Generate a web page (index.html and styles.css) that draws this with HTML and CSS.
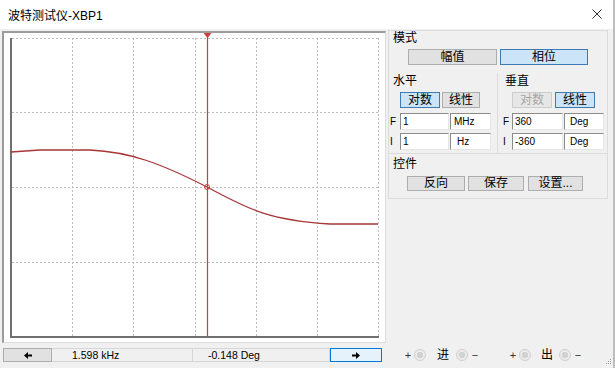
FILE: index.html
```html
<!DOCTYPE html>
<html lang="zh-CN">
<head>
    <meta charset="UTF-8">
    <title>波特测试仪-XBP1</title>
    <link rel="stylesheet" href="styles.css">
</head>
<body>
<div class="window">

    <!-- Title bar -->
    <div class="titlebar">
        <span class="title">波特测试仪-XBP1</span>
        <svg class="close" width="10" height="10" viewBox="0 0 10 10">
            <path d="M0.5 0.5 L9.5 9.5 M9.5 0.5 L0.5 9.5" stroke="#333" stroke-width="1" fill="none"/>
        </svg>
    </div>

    <div class="main">
        <!-- Plot area -->
        <div class="graph">
            <svg viewBox="4 33 381 309" width="381" height="309">
                <g class="grid">
                    <line x1="12" y1="38.5" x2="378" y2="38.5"/>
                    <line x1="378.5" y1="38" x2="378.5" y2="336"/>
                    <line x1="72.5" y1="38" x2="72.5" y2="336"/>
                    <line x1="133.5" y1="38" x2="133.5" y2="336"/>
                    <line x1="195.5" y1="38" x2="195.5" y2="336"/>
                    <line x1="256.5" y1="38" x2="256.5" y2="336"/>
                    <line x1="317.5" y1="38" x2="317.5" y2="336"/>
                    <line x1="12" y1="112.5" x2="378" y2="112.5"/>
                    <line x1="12" y1="187.5" x2="378" y2="187.5"/>
                    <line x1="12" y1="262.5" x2="378" y2="262.5"/>
                </g>
                <g class="axis">
                    <line x1="11" y1="38" x2="11" y2="338"/>
                    <line x1="10" y1="337" x2="379" y2="337"/>
                </g>
                <path class="curve" d="M11 152 L40 150 L90 150 C130 152 160 163 207 187 C245 207 265 220 330 224 L378 224"/>
                <line class="cursor" x1="207.5" y1="33" x2="207.5" y2="336"/>
                <polygon class="cursor-head" points="203.5,33 211.5,33 207.5,38"/>
                <circle class="cursor-mark" cx="207" cy="187" r="2.5"/>
            </svg>
        </div>

        <!-- Settings panel -->
        <div class="side">
            <div class="label">模式</div>
            <div class="mode-row">
                <button class="btn mode-mag">幅值</button>
                <button class="btn mode-phase on">相位</button>
            </div>

            <div class="axes">
                <div class="axis-box horiz">
                    <div class="label">水平</div>
                    <div class="toggle">
                        <button class="btn log on">对数</button>
                        <button class="btn lin">线性</button>
                    </div>
                    <div class="field-row">
                        <span class="fl">F</span>
                        <input class="num" value="1" readonly>
                        <input class="unit" value="MHz" readonly>
                    </div>
                    <div class="field-row">
                        <span class="fl">I</span>
                        <input class="num" value="1" readonly>
                        <input class="unit hz" value="Hz" readonly>
                    </div>
                </div>
                <div class="axis-box vert">
                    <div class="label">垂直</div>
                    <div class="toggle">
                        <button class="btn log off">对数</button>
                        <button class="btn lin on">线性</button>
                    </div>
                    <div class="field-row">
                        <span class="fl">F</span>
                        <input class="num" value="360" readonly>
                        <input class="unit deg" value="Deg" readonly>
                    </div>
                    <div class="field-row">
                        <span class="fl">I</span>
                        <input class="num" value="-360" readonly>
                        <input class="unit deg" value="Deg" readonly>
                    </div>
                </div>
            </div>

            <div class="label ctrl-label">控件</div>
            <div class="ctrl-row">
                <button class="btn rev">反向</button>
                <button class="btn save">保存</button>
                <button class="btn setup">设置...</button>
            </div>
        </div>
    </div>

    <!-- Cursor readout and terminals -->
    <div class="bottom">
        <div class="readout">
            <button class="btn arrow">
                <svg width="8" height="7" viewBox="0 0 8 7"><polygon points="0,3.5 4,0 4,2.5 8,2.5 8,4.5 4,4.5 4,7" fill="#000"/></svg>
            </button>
            <div class="value freq">1.598 kHz</div>
            <div class="value phase">-0.148 Deg</div>
            <button class="btn arrow focus">
                <svg width="8" height="7" viewBox="0 0 8 7"><polygon points="8,3.5 4,0 4,2.5 0,2.5 0,4.5 4,4.5 4,7" fill="#000"/></svg>
            </button>
        </div>
        <div class="terminals">
            <span class="sign">+</span>
            <span class="jack"></span>
            <span class="tname">进</span>
            <span class="jack j2"></span>
            <span class="sign minus">−</span>
        </div>
        <div class="terminals out">
            <span class="sign">+</span>
            <span class="jack"></span>
            <span class="tname">出</span>
            <span class="jack j2"></span>
            <span class="sign minus">−</span>
        </div>
        <svg class="grip" width="7" height="7" viewBox="0 0 7 7">
            <rect x="5" y="0" width="1" height="1" fill="#999"/>
            <rect x="3" y="2" width="1" height="1" fill="#999"/>
            <rect x="5" y="2" width="1" height="1" fill="#999"/>
            <rect x="1" y="4" width="1" height="1" fill="#999"/>
            <rect x="3" y="4" width="1" height="1" fill="#999"/>
            <rect x="5" y="4" width="1" height="1" fill="#999"/>
        </svg>
    </div>

</div>
</body>
</html>
```

FILE: styles.css
```css
body {
    margin: 0;
    font-family: "Liberation Sans", "Noto Sans CJK SC", sans-serif;
    font-size: 10px;
    color: #000;
}

.window {
    width: 615px;
    height: 368px;
    box-sizing: border-box;
    background: #f0f0f0;
    border-right: 2px solid #bdbdbd;
    display: flex;
    flex-direction: column;
    overflow: hidden;
}

/* Title bar */
.titlebar {
    height: 29px;
    flex: none;
    background: #fff;
    display: flex;
    align-items: center;
    justify-content: space-between;
    padding: 0 11px 0 8px;
}

.title {
    font-size: 12px;
    line-height: 14px;
    margin-top: 3px;
}

.close {
    margin-top: -1px;
}

/* Main row */
.main {
    display: flex;
    align-items: flex-start;
    gap: 2px;
    padding-left: 2px;
    margin-top: 2px;
}

.graph {
    width: 384px;
    height: 312px;
    flex: none;
    box-sizing: border-box;
    background: #fff;
    border-top: 2px solid #9c9c9c;
    border-left: 2px solid #9c9c9c;
    border-right: 1px solid #dcdcdc;
    border-bottom: 1px solid #dcdcdc;
}

.graph svg {
    display: block;
}

.grid line {
    stroke: #bcbcbc;
    stroke-width: 1;
    stroke-dasharray: 2 2;
}

.axis line {
    stroke: #707070;
    stroke-width: 2;
}

.curve {
    fill: none;
    stroke: #a83636;
    stroke-width: 1.3;
}

.cursor {
    stroke: #cc3f3f;
    stroke-width: 1.2;
}

.cursor-head {
    fill: #cc3f3f;
}

.cursor-mark {
    fill: none;
    stroke: #cc3f3f;
    stroke-width: 1;
}

/* Side panel */
.side {
    width: 220px;
    flex: none;
    box-sizing: border-box;
    margin-top: -1px;
    border: 1px solid #dcdcdc;
    padding-bottom: 7px;
}

.label {
    font-size: 12px;
    line-height: 14px;
    height: 14px;
    padding-left: 4px;
}

.btn {
    font-family: inherit;
    font-size: 12px;
    line-height: 13px;
    padding: 0;
    margin: 0;
    box-sizing: border-box;
    background: #e1e1e1;
    border: 1px solid #adadad;
    color: #000;
    display: flex;
    align-items: center;
    justify-content: center;
}

.btn.on {
    background: #cce4f7;
    border-color: #3c7ab4;
}

.btn.off {
    background: #e6e6e6;
    border-color: #cdcdcd;
    color: #a6a6a6;
}

.mode-row {
    display: flex;
    gap: 3px;
    margin: 4px 0 0 19px;
}

.mode-row .btn {
    height: 16px;
}

.mode-mag {
    width: 89px;
}

.mode-phase {
    width: 88px;
}

.axes {
    display: flex;
    margin-top: 8px;
}

.axis-box {
    box-sizing: border-box;
    border-bottom: 1px solid #dcdcdc;
    padding: 1px 0 3px;
}

.horiz {
    width: 109px;
    border-right: 1px solid #dcdcdc;
}

.vert {
    width: 109px;
}

.vert .label {
    padding-left: 7px;
}

.toggle {
    display: flex;
    margin-top: 4px;
}

.toggle .btn {
    height: 16px;
    width: 40px;
}

.horiz .toggle {
    gap: 2px;
    margin-left: 11px;
}

.horiz .toggle .lin {
    width: 38px;
}

.vert .toggle {
    gap: 3px;
    margin-left: 14px;
}

.field-row {
    display: flex;
    align-items: center;
    gap: 1px;
    height: 17px;
    margin-top: 5px;
}

.field-row + .field-row {
    margin-top: 3px;
}

.fl {
    width: 10px;
    box-sizing: border-box;
    padding-left: 1px;
    font-size: 10px;
}

.vert .fl {
    width: 13px;
    padding-left: 5px;
}

input {
    font-family: inherit;
    font-size: 10px;
    height: 17px;
    box-sizing: border-box;
    margin: 0;
    padding: 0 0 0 2px;
    background: #fff;
    color: #000;
    border: 1px solid;
    border-color: #8c8c8c #e6e6e6 #e6e6e6 #8c8c8c;
    outline: none;
}

.horiz .num {
    width: 49px;
}

.horiz .unit {
    width: 41px;
    padding-left: 3px;
}

.horiz .unit.hz {
    padding-left: 6px;
}

.vert .num {
    width: 51px;
}

.vert .unit {
    width: 40px;
    padding-left: 5px;
}

.ctrl-label {
    margin-top: 3px;
}

.ctrl-row {
    display: flex;
    margin: 5px 0 0 18px;
}

.ctrl-row .btn {
    height: 15px;
}

.rev {
    width: 58px;
}

.save {
    width: 56px;
    margin-left: 3px;
}

.setup {
    width: 55px;
    margin-left: 4px;
}

/* Bottom row */
.bottom {
    display: flex;
    align-items: center;
    height: 14px;
    margin-top: 5px;
    padding-left: 3px;
}

.readout {
    display: flex;
    width: 379px;
    height: 14px;
    flex: none;
}

.arrow {
    width: 49px;
    height: 14px;
}

.arrow.focus {
    width: 52px;
    background: #e5f1fb;
    border-color: #0078d7;
}

.value {
    box-sizing: border-box;
    height: 14px;
    line-height: 12px;
    font-size: 10.5px;
    border: 1px solid #d6d6d6;
    border-left: none;
}

.freq {
    width: 141px;
    padding-left: 20px;
}

.phase {
    width: 137px;
    padding-left: 15px;
}

.terminals {
    display: flex;
    align-items: center;
    margin-left: 22px;
    color: #333;
}

.terminals.out {
    margin-left: 30px;
}

.sign {
    width: 8px;
    text-align: center;
    font-size: 11px;
    line-height: 12px;
}

.jack {
    width: 12px;
    height: 12px;
    box-sizing: border-box;
    border-radius: 50%;
    margin-left: 2px;
    background: radial-gradient(circle, #d2d2d2 0 3px, #ececec 3.5px);
    border: 1px solid #cfcfcf;
}

.tname {
    font-size: 12px;
    line-height: 14px;
    margin-left: 11px;
    color: #000;
}

.out .tname {
    margin-left: 10px;
}

.jack.j2 {
    margin-left: 7px;
}

.out .jack.j2 {
    margin-left: 6px;
}

.minus {
    margin-left: 3px;
}

.grip {
    margin-left: auto;
    margin-right: 1px;
    align-self: flex-end;
    margin-bottom: -4px;
}
```
